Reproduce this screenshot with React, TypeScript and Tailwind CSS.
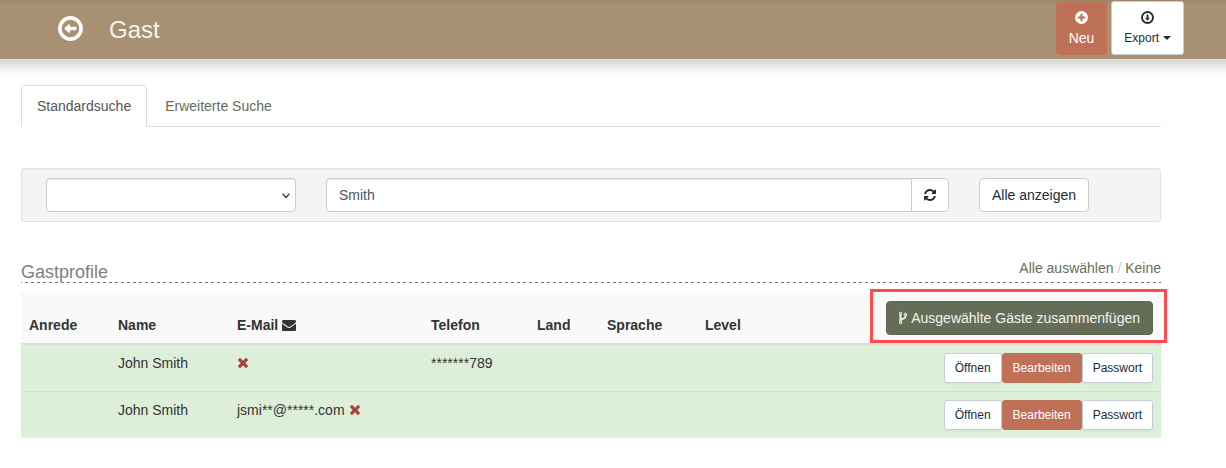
import { useState } from "react";
import type { ReactNode } from "react";

const paths = {
    plus: "M1344 960v-128q0-26-19-45t-45-19h-256v-256q0-26-19-45t-45-19h-128q-26 0-45 19t-19 45v256h-256q-26 0-45 19t-19 45v128q0 26 19 45t45 19h256v256q0 26 19 45t45 19h128q26 0 45-19t19-45v-256h256q26 0 45-19t19-45zm320-64q0 209-103 385.5t-279.5 279.5-385.5 103-385.5-103-279.5-279.5-103-385.5 103-385.5 279.5-279.5 385.5-103 385.5 103 279.5 279.5 103 385.5z",
    refresh:
        "M1639 1056q0 5-1 7-64 268-268 434.5t-478 166.5q-146 0-282.5-55t-243.5-157l-129 129q-19 19-45 19t-45-19-19-45v-448q0-26 19-45t45-19h448q26 0 45 19t19 45-19 45l-137 137q71 66 161 102t187 36q134 0 250-65t186-179q11-17 53-117 8-23 30-23h192q13 0 22.5 9.5t9.5 22.5zm25-800v448q0 26-19 45t-45 19h-448q-26 0-45-19t-19-45 19-45l138-138q-148-137-349-137-134 0-250 65t-186 179q-11 17-53 117-8 23-30 23h-199q-13 0-22.5-9.5t-9.5-22.5v-7q65-268 270-434.5t480-166.5q146 0 284 55.5t245 156.5l130-129q19-19 45-19t45 19 19 45z",
    envelope:
        "M1792 710v794q0 66-47 113t-113 47h-1472q-66 0-113-47t-47-113v-794q44 49 101 87 362 246 497 345 57 42 92.5 65.5t94.5 48 110 24.5h2q51 0 110-24.5t94.5-48 92.5-65.5q170-123 498-345 57-39 100-87zm0-294q0 79-49 151t-122 123q-376 261-468 325-10 7-42.5 31t-54 38.5-52 32.5-57.5 27-50 9h-2q-23 0-50-9t-57.5-27-52-32.5-54-38.5-42.5-31q-91-64-262-182.5t-205-142.5q-62-42-117-115.5t-55-136.5q0-78 41.5-130t118.5-52h1472q65 0 112.5 47t47.5 113z",
    times: "M1490 1322q0 40-28 68l-136 136q-28 28-68 28t-68-28l-294-294-294 294q-28 28-68 28t-68-28l-136-136q-28-28-28-68t28-68l294-294-294-294q-28-28-28-68t28-68l136-136q28-28 68-28t68 28l294 294 294-294q28-28 68-28t68 28l136 136q28 28 28 68t-28 68l-294 294 294 294q28 28 28 68z",
    fork: "M672 1472q0-40-28-68t-68-28-68 28-28 68 28 68 68 28 68-28 28-68zm0-1152q0-40-28-68t-68-28-68 28-28 68 28 68 68 28 68-28 28-68zm640 128q0-40-28-68t-68-28-68 28-28 68 28 68 68 28 68-28 28-68zm96 0q0 52-26 96.5t-70 69.5q-2 287-226 414-67 38-203 81-128 40-169.5 71t-41.5 100v26q44 25 70 69.5t26 96.5q0 80-56 136t-136 56-136-56-56-136q0-52 26-96.5t70-69.5v-820q-44-25-70-69.5t-26-96.5q0-80 56-136t136-56 136 56 56 136q0 52-26 96.5t-70 69.5v497q54-26 154-57 55-17 87.5-29.5t70.5-31 59-39.5 40.5-51 28-69.5 8.5-91.5q-44-25-70-69.5t-26-96.5q0-80 56-136t136-56 136 56 56 136z",
};

function Icon({ name, className, viewBox = "0 0 1792 1792" }: { name: keyof typeof paths; className: string; viewBox?: string }) {
    return (
        <svg viewBox={viewBox} className={className} fill="currentColor" aria-hidden="true">
            <path d={paths[name]} />
        </svg>
    );
}

// Points left, rotate it for other directions
function CircleArrow({ className }: { className: string }) {
    return (
        <svg viewBox="0 0 25 25" className={className} fill="none" stroke="currentColor" aria-hidden="true">
            <circle cx="12.5" cy="12.5" r="10.6" strokeWidth="3.6" />
            <path d="M7 12.5 11.2 8.9v2.6h6.6v2h-6.6v2.6z" fill="currentColor" strokeWidth="1.4" strokeLinejoin="round" />
        </svg>
    );
}

const guests: { id: number; name: string; email: string; phone: string }[] = [
    { id: 1, name: "John Smith", email: "", phone: "*******789" },
    { id: 2, name: "John Smith", email: "jsmi**@*****.com", phone: "" },
];

function RowButton({ children, primary }: { children: ReactNode; primary?: boolean }) {
    return (
        <button
            type="button"
            className={
                primary
                    ? "h-[30px] px-[10px] border border-[#bf7157] rounded-[3px] bg-[#bf7157] text-white text-xs"
                    : "h-[30px] px-[10px] border border-[#c5ccd5] rounded-[3px] bg-white text-[#212b37] text-xs shadow-xs"
            }
        >
            {children}
        </button>
    );
}

export default function App() {
    const [query, setQuery] = useState("Smith");

    return (
        <div className="w-full min-h-screen bg-white text-sm leading-5 text-[#333] font-['Liberation_Sans',Arial,sans-serif]">

            {/* Header bar */}
            <header className="flex items-center justify-between h-[60px] pl-[58px] pr-[42px] bg-[linear-gradient(#9c8769,#a89172_5px)] border-b border-[#e6e0d8]">
                <div className="flex items-center gap-[26px]">
                    <a href="#back" aria-label="Zurück" className="pb-[3px] text-white">
                        <CircleArrow className="size-[25px]" />
                    </a>
                    <h1 className="text-2xl text-[#f5f3f0]">Gast</h1>
                </div>
                <div className="flex gap-1 pb-1">
                    <button type="button" className="flex flex-col items-center px-3 py-[6px] border border-[#bf7157] rounded bg-[#bf7157] text-white">
                        <span className="flex items-center h-5">
                            <Icon name="plus" className="size-[15px]" />
                        </span>
                        Neu
                    </button>
                    <button type="button" className="flex flex-col items-center px-3 py-[6px] border border-[#c5ccd5] rounded-[3px] bg-white text-[#212b37] text-xs leading-5">
                        <span className="flex items-center h-5">
                            <CircleArrow className="size-[13px] -rotate-90" />
                        </span>
                        <span className="flex items-center gap-1">
                            Export
                            <svg viewBox="0 0 8 4" className="w-2 h-1" fill="currentColor" aria-hidden="true">
                                <path d="M0 0h8L4 4z" />
                            </svg>
                        </span>
                    </button>
                </div>
            </header>
            <div className="h-4 bg-[linear-gradient(#d3d3d3,#ededed_45%,#fff)]" />

            <main className="max-w-[1161px] pl-[21px] pt-[9px]">

                {/* Search tabs */}
                <nav className="flex gap-[2px] border-b border-[#ddd]">
                    <a href="#standard" className="-mb-px px-[15px] py-[10px] border border-[#ddd] border-b-white rounded-t bg-white text-[#555]">
                        Standardsuche
                    </a>
                    <a href="#erweitert" className="-mb-px px-[15px] py-[10px] border border-transparent text-[#666e58]">
                        Erweiterte Suche
                    </a>
                </nav>

                {/* Filter */}
                <form
                    onSubmit={(e) => e.preventDefault()}
                    className="flex gap-[30px] mt-[41px] pl-6 pr-[71px] py-[9px] border border-[#e3e3e3] rounded-[3px] bg-[#f4f4f4] shadow-[inset_0_1px_1px_rgba(0,0,0,0.05)]"
                >
                    <div className="relative w-[250px]">
                        <select
                            aria-label="Suchfeld"
                            className="w-full h-[34px] px-3 border border-[#ccc] rounded bg-white text-[#555] appearance-none shadow-[inset_0_1px_1px_rgba(0,0,0,0.075)]"
                        >
                            <option value=""></option>
                        </select>
                        <svg viewBox="0 0 8 6" className="absolute right-[6px] top-[15px] w-2 h-[6px] pointer-events-none" fill="none" stroke="#444" strokeWidth="1.5" aria-hidden="true">
                            <path d="M.6 .8 4 4.4 7.4 .8" />
                        </svg>
                    </div>
                    <div className="flex flex-1">
                        <input
                            type="text"
                            aria-label="Suchbegriff"
                            value={query}
                            onChange={(e) => setQuery(e.target.value)}
                            className="flex-1 min-w-0 h-[34px] px-3 border border-[#ccc] rounded-l bg-white text-[#555] shadow-[inset_0_1px_1px_rgba(0,0,0,0.075)]"
                        />
                        <button type="submit" aria-label="Suchen" className="-ml-px px-3 border border-[#c5ccd5] rounded-r bg-white text-[#212b37]">
                            <Icon name="refresh" viewBox="128 128 1536 1536" className="size-3" />
                        </button>
                    </div>
                    <button type="button" className="h-[34px] px-3 border border-[#c5ccd5] rounded bg-white text-[#212b37]">
                        Alle anzeigen
                    </button>
                </form>

                {/* Results */}
                <div className="flex items-end justify-between mt-[36px]">
                    <h2 className="text-lg leading-5 text-[#808080]">Gastprofile</h2>
                    <p className="pb-1 text-[#ccc]">
                        <a href="#alle" className="text-[#666e58]">Alle auswählen</a> / <a href="#keine" className="text-[#666e58]">Keine</a>
                    </p>
                </div>
                <div className="h-px bg-[repeating-linear-gradient(90deg,#777_0_1px,transparent_1px_4px,#777_4px_6px)]" />

                <table className="table-fixed w-full mt-[10px] text-left">
                    <colgroup>
                        <col className="w-[89px]" />
                        <col className="w-[119px]" />
                        <col className="w-[194px]" />
                        <col className="w-[106px]" />
                        <col className="w-[70px]" />
                        <col className="w-[98px]" />
                        <col className="w-[90px]" />
                        <col />
                    </colgroup>
                    <thead className="bg-[#f9f9f9]">
                        <tr className="border-b-2 border-[#ddd] align-bottom">
                            <th className="p-2">Anrede</th>
                            <th className="p-2">Name</th>
                            <th className="p-2">
                                <span className="flex items-center gap-1">
                                    E-Mail
                                    <Icon name="envelope" className="size-[14px]" />
                                </span>
                            </th>
                            <th className="p-2">Telefon</th>
                            <th className="p-2">Land</th>
                            <th className="p-2">Sprache</th>
                            <th className="p-2">Level</th>
                            <th className="p-2 font-normal">
                                <div className="relative w-fit ml-auto">
                                    <button type="button" className="flex items-center gap-1 h-[34px] px-3 border border-[#5e6751] rounded bg-[#656d57] text-[#f3f3f0]">
                                        <Icon name="fork" viewBox="384 0 1024 1792" className="w-2 h-[14px] stroke-current stroke-[60]" />
                                        Ausgewählte Gäste zusammenfügen
                                    </button>
                                    <span className="absolute -left-4 -right-[14px] -top-3 -bottom-2 border-[3px] border-[#ff4b4b] pointer-events-none" />
                                </div>
                            </th>
                        </tr>
                    </thead>
                    <tbody className="bg-[#ddefd9]">
                        {guests.map((guest) => (
                            <tr key={guest.id} className="align-top border-t border-[#d9ddd8] first:border-t-0">
                                <td className="p-2"></td>
                                <td className="p-2">{guest.name}</td>
                                <td className="p-2">
                                    <span className="flex items-center gap-1 h-5">
                                        {guest.email}
                                        <Icon name="times" viewBox="183 366 1307 1188" className="w-[11px] h-[10px] text-[#a94442]" />
                                    </span>
                                </td>
                                <td className="p-2">{guest.phone}</td>
                                <td className="p-2"></td>
                                <td className="p-2"></td>
                                <td className="p-2"></td>
                                <td className="p-2">
                                    <div className="flex justify-end">
                                        <RowButton>Öffnen</RowButton>
                                        <RowButton primary>Bearbeiten</RowButton>
                                        <RowButton>Passwort</RowButton>
                                    </div>
                                </td>
                            </tr>
                        ))}
                    </tbody>
                </table>
            </main>
        </div>
    );
}
